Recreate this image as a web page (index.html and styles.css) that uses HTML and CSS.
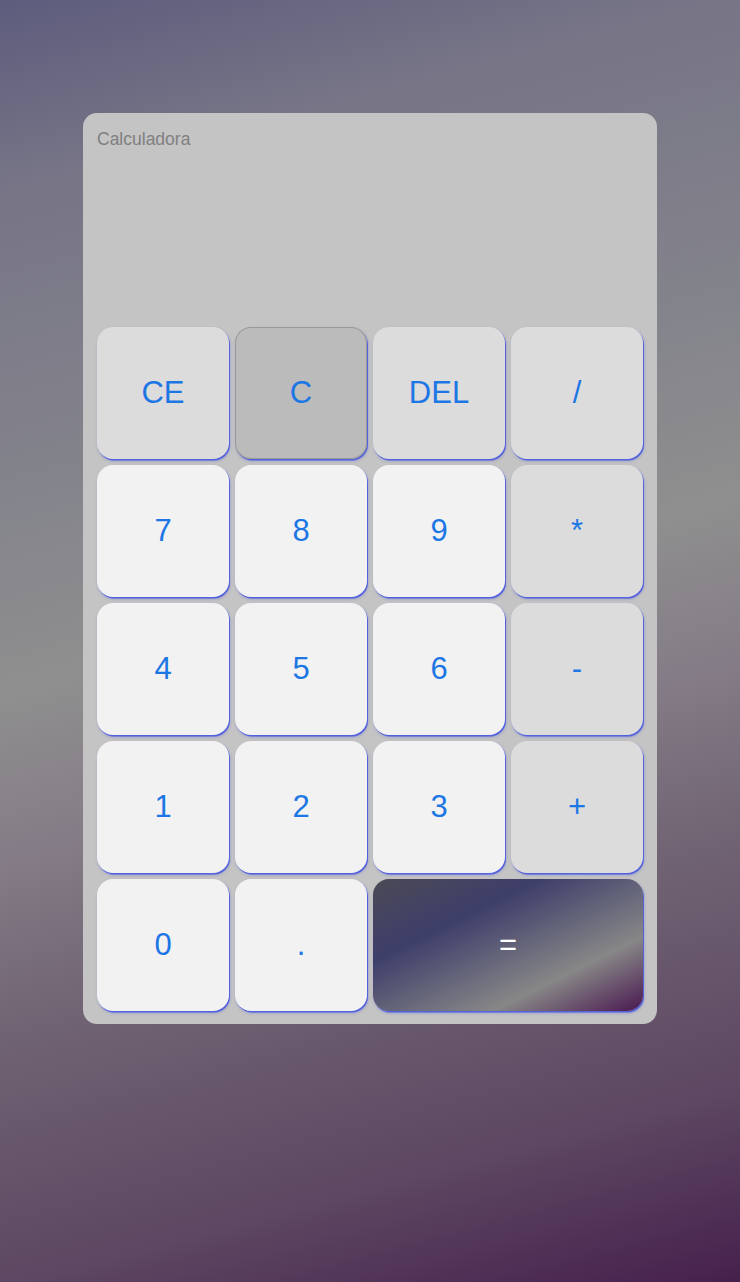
FILE: index.html
```html
<!DOCTYPE html>
<html lang="es">
<head>
<meta charset="utf-8">
<title>Calculadora</title>
<link rel="stylesheet" href="styles.css">
</head>
<body>
<main class="page">
  <section class="calc">
    <header class="display">
      <div class="title">Calculadora</div>
      <div class="result"></div>
    </header>
    <div class="keys">
      <button class="key op">CE</button>
      <button class="key pressed">C</button>
      <button class="key op">DEL</button>
      <button class="key op">/</button>
      <button class="key">7</button>
      <button class="key">8</button>
      <button class="key">9</button>
      <button class="key op">*</button>
      <button class="key">4</button>
      <button class="key">5</button>
      <button class="key">6</button>
      <button class="key op">-</button>
      <button class="key">1</button>
      <button class="key">2</button>
      <button class="key">3</button>
      <button class="key op">+</button>
      <button class="key">0</button>
      <button class="key">.</button>
      <button class="key equals">=</button>
    </div>
  </section>
</main>
</body>
</html>
```
FILE: styles.css
```css
html, body {
  margin: 0;
  padding: 0;
}

body {
  min-height: 1282px;
  font-family: "Liberation Sans", Helvetica, Arial, sans-serif;
  background: linear-gradient(165deg,
    #5d5c7d 0%,
    #777586 13%,
    #84848c 34%,
    #8f8f8f 47%,
    #847c86 58%,
    #706373 70%,
    #5d4762 87%,
    #46204c 100%);
}

.page {
  display: flex;
  justify-content: center;
  padding-top: 113px;
}

.calc {
  width: 546px;
  padding: 14px 14px 13px;
  background: #c4c4c4;
  border-radius: 14px;
}

.display {
  height: 200px;
  display: flex;
  flex-direction: column;
}

.title {
  font-size: 17.5px;
  line-height: 24px;
  color: #808080;
}

.result {
  flex: 1;
}

.keys {
  display: grid;
  grid-template-columns: repeat(4, 132px);
  grid-auto-rows: 132px;
  gap: 6px;
}

.key {
  border: none;
  margin: 0;
  padding: 0;
  border-radius: 16px;
  background: #f2f2f3;
  color: #1c76e4;
  font-family: "Liberation Sans", Helvetica, Arial, sans-serif;
  font-size: 31px;
  box-shadow: 1px 1.5px 0.5px #5462dc, 1px 2px 3px rgba(80, 90, 220, 0.45);
}

.key.op {
  background: #dcdcdd;
}

.key.pressed {
  background: #bbbbbb;
  box-shadow: inset 0 0 0 1px #9a9a9a, 1px 1.5px 0.5px #5462dc, 1px 2px 3px rgba(80, 90, 220, 0.45);
}

.key.equals {
  grid-column: span 2;
  color: #ffffff;
  background: linear-gradient(to bottom right,
    #4b4a55 0%,
    #3e3e6b 31%,
    #878787 72%,
    #4a1850 100%);
}
```
